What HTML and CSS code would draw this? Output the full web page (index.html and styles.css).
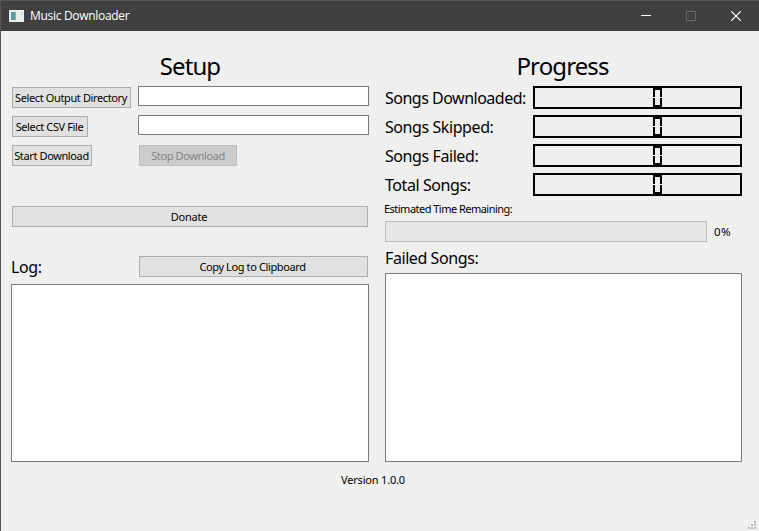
FILE: index.html
```html
<!DOCTYPE html>
<html lang="en">
<head>
<meta charset="utf-8">
<title>Music Downloader</title>
<link rel="stylesheet" href="styles.css">
</head>
<body>
<div class="window">
  <header class="titlebar">
    <svg class="app-icon" width="15" height="12" viewBox="0 0 15 12"><path fill="#e9eeee" d="M0 0h15v12H0z"/><path fill="#5f9a96" d="M2 2h5v8H2z"/><path fill="#86b5b1" d="M6 2h1v8H6z"/><path fill="#c9dcd5" d="M12 2h2v3h-2z"/></svg>
    <h1 class="title">Music Downloader</h1>
    <div class="controls">
      <svg width="10" height="10" viewBox="0 0 10 10"><path d="M0 4.5h10" stroke="#fff"/></svg>
      <svg width="10" height="10" viewBox="0 0 10 10"><path d="M.5.5h9v9h-9z" stroke="#686868" fill="none"/></svg>
      <svg width="10" height="10" viewBox="0 0 10 10"><path d="M0 0l10 10M10 0L0 10" stroke="#fff" stroke-width="1.2"/></svg>
    </div>
  </header>
  <main class="content">
    <section class="setup">
      <h2 class="heading">Setup</h2>
      <div class="form">
        <button class="b-out"><span>Select Output Directory</span></button><input class="field" aria-label="Output directory">
        <button class="b-csv"><span>Select CSV File</span></button><input class="field" aria-label="CSV file">
        <button class="b-start"><span>Start Download</span></button><button class="b-stop" disabled><span>Stop Download</span></button>
      </div>
      <button class="b-donate"><span>Donate</span></button>
      <div class="log-head"><span class="label">Log:</span><button class="b-copy"><span>Copy Log to Clipboard</span></button></div>
      <div class="box log"></div>
    </section>
    <section class="progress">
      <h2 class="heading heading-progress">Progress</h2>
      <div class="stats">
        <span class="label label-wide">Songs Downloaded:</span><div class="lcd"><i></i></div>
        <span class="label">Songs Skipped:</span><div class="lcd"><i></i></div>
        <span class="label">Songs Failed:</span><div class="lcd"><i></i></div>
        <span class="label">Total Songs:</span><div class="lcd"><i></i></div>
      </div>
      <p class="eta"><span>Estimated Time Remaining:</span></p>
      <div class="bar-row"><div class="bar"></div><span class="pct">0%</span></div>
      <p class="failed-label"><span class="label">Failed Songs:</span></p>
      <div class="box failed"></div>
    </section>
  </main>
  <footer class="footer">
    <span class="version">Version 1.0.0</span>
    <svg class="grip" width="8" height="8" viewBox="0 0 8 8" fill="#bdbdbd"><path d="M6 0h2v2H6zM3 3h2v2H3zM6 3h2v2H6zM0 6h2v2H0zM3 6h2v2H3zM6 6h2v2H6z"/></svg>
  </footer>
</div>
</body>
</html>
```

FILE: styles.css
```css
* { box-sizing: border-box; margin: 0; }
body { font: 11px/13px "Noto Sans", sans-serif; letter-spacing: -0.38px; color: #000; background: #efefef; overflow: hidden; }
span { white-space: nowrap; }
.window { width: 759px; height: 531px; display: flex; flex-direction: column; border-left: 1px solid #565656; background: #efefef; }
.titlebar { height: 31px; flex: none; display: flex; align-items: center; background: #404040; border-top: 1px solid #565656; padding: 0 18px 1px 8px; }
.title { font: 12px/16px "Open Sans", sans-serif; color: #fff; margin: 1px 0 0 6px; letter-spacing: -0.31px; }
.controls { margin-left: auto; display: flex; gap: 35px; }
.content { display: grid; grid-template-columns: 358px 357px; column-gap: 16px; padding-left: 10px; height: 431px; }
.heading { height: 55px; padding-top: 20px; font-size: 24px; line-height: 30px; font-weight: 400; text-align: center; letter-spacing: -0.9px; }
.heading-progress { padding-right: 2px; }
.setup, .progress { display: flex; flex-direction: column; }
.form { display: grid; grid-template-columns: 127px 231px; grid-auto-rows: 20px; row-gap: 9px; align-items: start; }
button { height: 21px; font: inherit; letter-spacing: inherit; color: #000; padding: 0 0 1px; background: #e1e1e1; border: 1px solid #adadad; display: flex; align-items: center; justify-content: center; margin: 1px 0 0 1px; }
.b-out { width: 119px; }
.b-out span, .b-csv span, .b-start span { margin-right: 1px; }
.b-csv { width: 76px; }
.b-start { width: 80px; }
.b-stop { width: 98px; background: #ccc; border-color: #bfbfbf; color: #838383; }
.field { height: 20px; width: 231px; border: 1px solid #7a7a7a; background: #fff; padding: 0; }
.b-donate { width: 356px; margin-top: 42px; letter-spacing: -0.25px; }
.b-donate span { margin-right: 2px; }
.log-head { display: grid; grid-template-columns: 127px 230px; height: 21px; margin-top: 29px; align-items: center; }
.b-copy { margin-top: 0; width: 229px; }
.b-copy span { margin-right: 2px; }
.label { font-size: 16px; line-height: 20px; letter-spacing: -0.42px; }
.label-wide { letter-spacing: -0.5px; }
.box { background: #fff; border: 1px solid #7a7a7a; }
.log { height: 178px; margin-top: 7px; }
.stats { display: grid; grid-template-columns: 148px 209px; grid-auto-rows: 23px; row-gap: 6px; align-items: center; }
.lcd { height: 23px; border: 2px solid #000; padding-left: 118px; }
.lcd i { display: block; width: 9px; height: 19px; border: 2px solid #000; border-image: linear-gradient(#000 9px, #fff 9px, #fff 10px, #000 10px) 2; }
.eta { height: 13px; margin-top: 6px; margin-left: -1px; letter-spacing: -0.52px; }
.bar-row { display: flex; align-items: center; margin-top: 6px; height: 21px; }
.bar { width: 322px; height: 21px; background: #e6e6e6; border: 1px solid #bcbcbc; }
.pct { margin-left: 7px; font-size: 11.5px; letter-spacing: 0.5px; }
.failed-label { height: 20px; margin-top: 6px; }
.failed { height: 189px; margin-top: 5px; }
.footer { flex: 1; display: flex; justify-content: space-between; padding: 11px 3px 2px 340px; letter-spacing: -0.18px; }
.grip { align-self: flex-end; }
```
